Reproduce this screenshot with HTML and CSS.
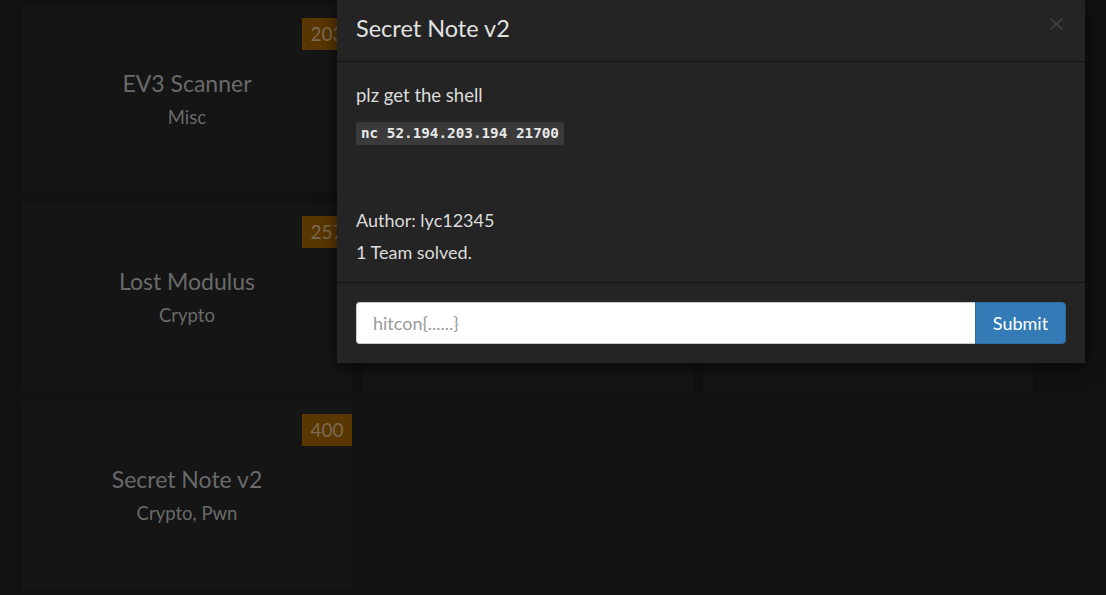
FILE: index.html
```html
<!DOCTYPE html>
<html>
<head>
<meta charset="utf-8">
<link rel="stylesheet" href="styles.css">
</head>
<body>
<div class="board">
  <div class="card"><span class="pts">203</span><div class="name">EV3 Scanner</div><div class="cat">Misc</div></div>
  <div class="card"></div>
  <div class="card"></div>
  <div class="card"><span class="pts">257</span><div class="name">Lost Modulus</div><div class="cat">Crypto</div></div>
  <div class="card"></div>
  <div class="card"></div>
  <div class="card"><span class="pts">400</span><div class="name">Secret Note v2</div><div class="cat">Crypto, Pwn</div></div>
</div>

<div class="modal">
  <div class="modal-header">
    <h4 class="modal-title">Secret Note v2</h4>
    <svg class="close" width="13" height="12" viewBox="0 0 13 12"><path d="M0.5 0.5 L12.5 11.5 M12.5 0.5 L0.5 11.5" stroke="#474747" stroke-width="1.3" fill="none"/></svg>
  </div>
  <div class="modal-body">
    <p class="desc">plz get the shell</p>
    <code class="cmd">nc 52.194.203.194 21700</code>
    <p class="meta author">Author: lyc12345</p>
    <p class="meta">1 Team solved.</p>
  </div>
  <div class="modal-footer">
    <div class="input-group">
      <input class="flag" type="text" placeholder="hitcon{......}">
      <button class="submit">Submit</button>
    </div>
  </div>
</div>
</body>
</html>
```

FILE: styles.css
```css
html, body {
  margin: 0;
  padding: 0;
  background: #111111;
  height: 100%;
  overflow: hidden;
  font-family: Lato, "Noto Sans", sans-serif;
}

.board {
  display: grid;
  grid-template-columns: repeat(3, 330px);
  column-gap: 10.5px;
  row-gap: 10px;
  padding: 5px 0 0 22px;
}

.card {
  position: relative;
  height: 188px;
  background: #151515;
  display: flex;
  flex-direction: column;
  align-items: center;
  justify-content: center;
  padding-bottom: 2px;
  box-sizing: border-box;
  color: #6a6a6a;
}

.pts {
  position: absolute;
  top: 13px;
  right: 0;
  width: 50px;
  height: 32px;
  background: #5a3600;
  color: #7a6a55;
  font-size: 19px;
  line-height: 32px;
  text-align: center;
}

.name {
  font-size: 23px;
  line-height: 30px;
}

.cat {
  font-size: 18.5px;
  line-height: 24px;
  margin-top: 7px;
}

.modal {
  position: absolute;
  left: 337px;
  top: 0;
  width: 748px;
  background: #242424;
  box-shadow: 0 5px 15px rgba(0, 0, 0, 0.6);
  color: #dcdcdc;
}

.modal-header {
  height: 62px;
  box-sizing: border-box;
  padding: 0 22px 0 19px;
  display: flex;
  align-items: center;
  justify-content: space-between;
  border-bottom: 1px solid #141414;
}

.modal-title {
  margin: 0 0 6px 0;
  font-weight: normal;
  font-size: 23.5px;
  color: #e2e2e2;
}

.close {
  display: block;
  margin-bottom: 14px;
}

.modal-body {
  padding: 21px 19px 14px;
  display: flex;
  flex-direction: column;
  align-items: flex-start;
}

.desc {
  margin: 0;
  font-size: 18.5px;
  line-height: 24px;
}

.cmd {
  margin-top: 15px;
  background: #3a3a3a;
  color: #e8e8e8;
  font-family: "DejaVu Sans Mono", monospace;
  font-weight: bold;
  font-size: 14.3px;
  line-height: 23px;
  padding: 0 5px;
  border-radius: 2px;
}

.meta {
  margin: 0;
  font-size: 18px;
  line-height: 32px;
}

.author {
  margin-top: 59px;
}

.modal-footer {
  border-top: 1px solid #141414;
  padding: 19px;
}

.input-group {
  display: flex;
  height: 42px;
}

.flag {
  flex: 1;
  border: 1px solid #cccccc;
  border-right: none;
  border-radius: 4px 0 0 4px;
  background: #ffffff;
  padding: 0 16px;
  font-family: Lato, "Noto Sans", sans-serif;
  font-size: 18px;
  outline: none;
}

.flag::placeholder {
  color: #999999;
}

.submit {
  width: 91px;
  border: 1px solid #2e6da4;
  background: #337ab7;
  color: #ffffff;
  border-radius: 0 4px 4px 0;
  font-family: Lato, "Noto Sans", sans-serif;
  font-size: 18px;
  padding: 0;
}
```
